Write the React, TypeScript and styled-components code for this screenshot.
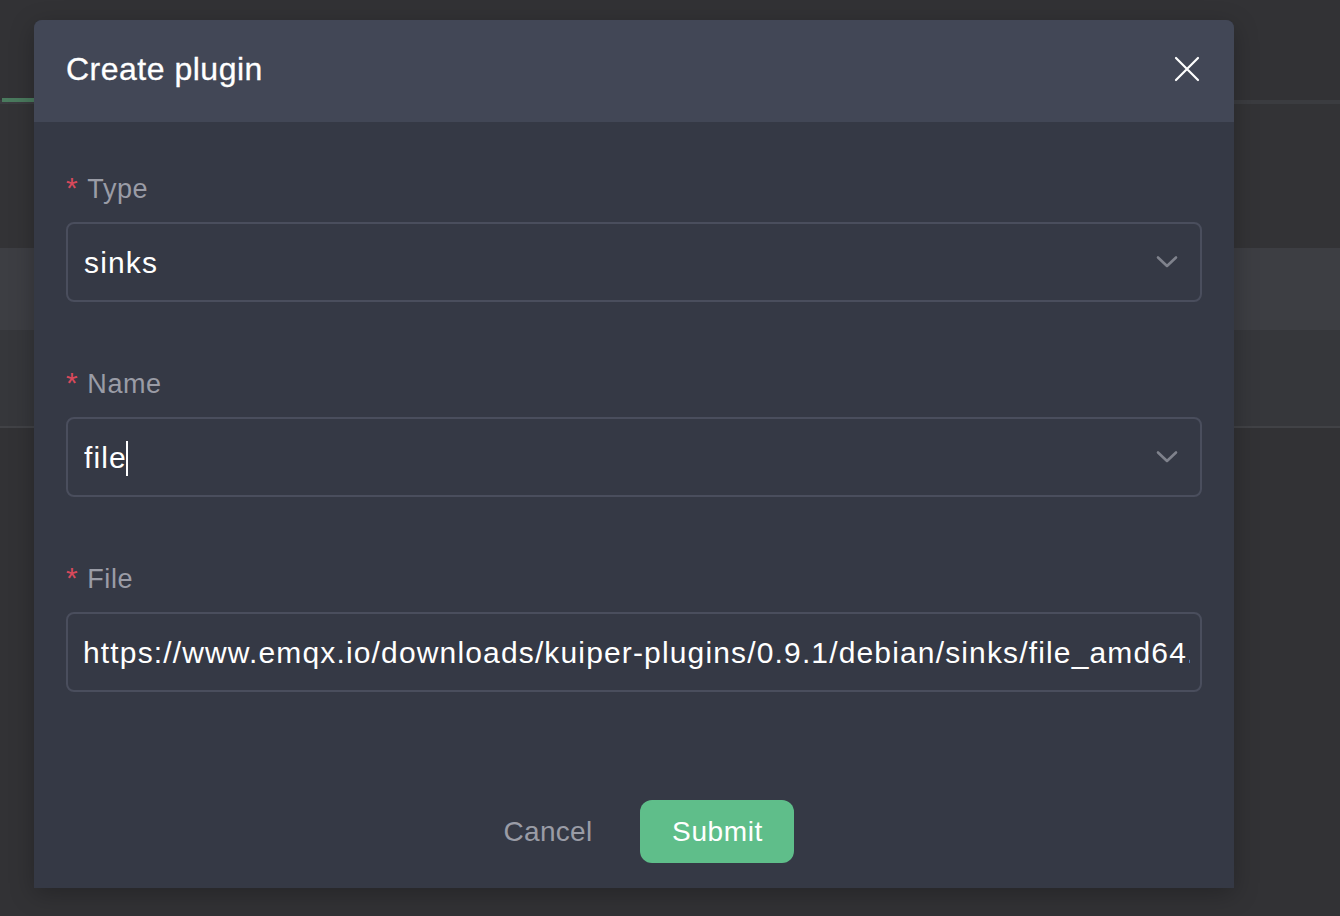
import React from "react";
import styled, { createGlobalStyle } from "styled-components";

const GlobalStyle = createGlobalStyle`
  html, body {
    margin: 0;
    padding: 0;
    background: #323235;
    font-family: "Liberation Sans", Arial, sans-serif;
  }
  * { box-sizing: border-box; }
`;

const Page = styled.div`
  width: 1340px;
  height: 916px;
  background: #323235;
  overflow: hidden;
  position: relative;
`;

const TabBar = styled.div`
  height: 104px;
  padding-left: 2px;
  display: flex;
  align-items: flex-end;
  border-bottom: 4px solid #3b3c40;
`;

const Tab = styled.div`
  width: 180px;
  height: 4px;
  margin-bottom: -2px;
  background: #4a7a5e;
`;

const Toolbar = styled.div`
  height: 144px;
  background: #333336;
`;

const TableHead = styled.div`
  height: 82px;
  background: #3d3e43;
`;

const TableRow = styled.div`
  height: 98px;
  background: #36373b;
  border-bottom: 2px solid #414246;
`;

const Overlay = styled.div`
  position: absolute;
  inset: 0;
  padding: 20px 0 0 34px;
`;

const Modal = styled.div`
  width: 1200px;
  height: 868px;
  background: #353945;
  border-radius: 8px 8px 0 0;
  box-shadow: 0 6px 24px rgba(0, 0, 0, 0.25);
  display: flex;
  flex-direction: column;
`;

const Header = styled.div`
  height: 102px;
  background: #424756;
  border-radius: 8px 8px 0 0;
  display: flex;
  align-items: center;
  justify-content: space-between;
  padding: 0 34px 0 32px;
`;

const Title = styled.h2`
  margin: 0;
  margin-top: -3px;
  font-size: 32px;
  font-weight: 500;
  color: #ffffff;
  letter-spacing: 0.5px;
  -webkit-text-stroke: 0.3px #ffffff;
`;

const CloseButton = styled.button`
  width: 26px;
  height: 26px;
  padding: 0;
  border: none;
  background: transparent;
  display: flex;
  align-items: center;
  justify-content: center;
  cursor: pointer;
  margin-top: -4px;
`;

const Body = styled.div`
  flex: 1;
  padding: 45px 32px 0 32px;
  display: flex;
  flex-direction: column;
`;

const FormItem = styled.div`
  display: flex;
  flex-direction: column;
  margin-bottom: 60px;
`;

const Label = styled.label`
  height: 44px;
  margin-bottom: 11px;
  display: flex;
  align-items: center;
  font-size: 27px;
  letter-spacing: 0.6px;
  color: #9a9ca6;
`;

const Required = styled.span`
  color: #d8495b;
  margin-right: 9px;
  font-size: 30px;
  margin-top: -2px;
`;

const Field = styled.div<{ $select?: boolean }>`
  height: 80px;
  border: 2px solid #4a4e5d;
  border-radius: 8px;
  display: flex;
  align-items: center;
  padding: ${(p) => (p.$select ? "0 22px 0 16px" : "0 10px 0 15px")};
  overflow: hidden;
`;

const FieldText = styled.span`
  flex: 1;
  min-width: 0;
  font-size: 30px;
  color: #ffffff;
  white-space: nowrap;
  overflow: hidden;
  display: flex;
  align-items: center;
  letter-spacing: 1.15px;
  margin-top: 2px;
`;

const Caret = styled.span`
  display: inline-block;
  flex: none;
  width: 2px;
  height: 35px;
  margin-left: -1px;
  background: #ffffff;
`;

const Footer = styled.div`
  margin-top: auto;
  padding-bottom: 25px;
  display: flex;
  justify-content: center;
  align-items: center;
  gap: 48px;
  padding-left: 30px;
`;

const CancelButton = styled.button`
  border: none;
  background: transparent;
  font-family: inherit;
  font-size: 28px;
  letter-spacing: 0.3px;
  color: #9a9ca6;
  padding: 0;
  cursor: pointer;
`;

const SubmitButton = styled.button`
  width: 154px;
  height: 63px;
  border: none;
  border-radius: 12px;
  background: #5fbe8a;
  color: #ffffff;
  font-family: inherit;
  font-size: 28px;
  letter-spacing: 0.6px;
  cursor: pointer;
`;

const Chevron = () => (
  <svg width="22" height="14" viewBox="0 0 22 14" fill="none">
    <path d="M2 2.5 L11 11 L20 2.5" stroke="#7f828c" strokeWidth="2.6" strokeLinecap="round" strokeLinejoin="round" />
  </svg>
);

const CloseIcon = () => (
  <svg width="26" height="26" viewBox="0 0 26 26" fill="none">
    <path d="M2 2 L24 24 M24 2 L2 24" stroke="#ffffff" strokeWidth="2.2" strokeLinecap="round" />
  </svg>
);

export default function App() {
  return (
    <>
      <GlobalStyle />
      <Page>
        <TabBar>
          <Tab />
        </TabBar>
        <Toolbar />
        <TableHead />
        <TableRow />
        <Overlay>
          <Modal>
            <Header>
              <Title>Create plugin</Title>
              <CloseButton aria-label="Close">
                <CloseIcon />
              </CloseButton>
            </Header>
            <Body>
              <FormItem>
                <Label>
                  <Required>*</Required>Type
                </Label>
                <Field $select>
                  <FieldText>sinks</FieldText>
                  <Chevron />
                </Field>
              </FormItem>
              <FormItem>
                <Label>
                  <Required>*</Required>Name
                </Label>
                <Field $select>
                  <FieldText>
                    file
                    <Caret />
                  </FieldText>
                  <Chevron />
                </Field>
              </FormItem>
              <FormItem>
                <Label>
                  <Required>*</Required>File
                </Label>
                <Field>
                  <FieldText>https://www.emqx.io/downloads/kuiper-plugins/0.9.1/debian/sinks/file_amd64.zip</FieldText>
                </Field>
              </FormItem>
              <Footer>
                <CancelButton>Cancel</CancelButton>
                <SubmitButton>Submit</SubmitButton>
              </Footer>
            </Body>
          </Modal>
        </Overlay>
      </Page>
    </>
  );
}
